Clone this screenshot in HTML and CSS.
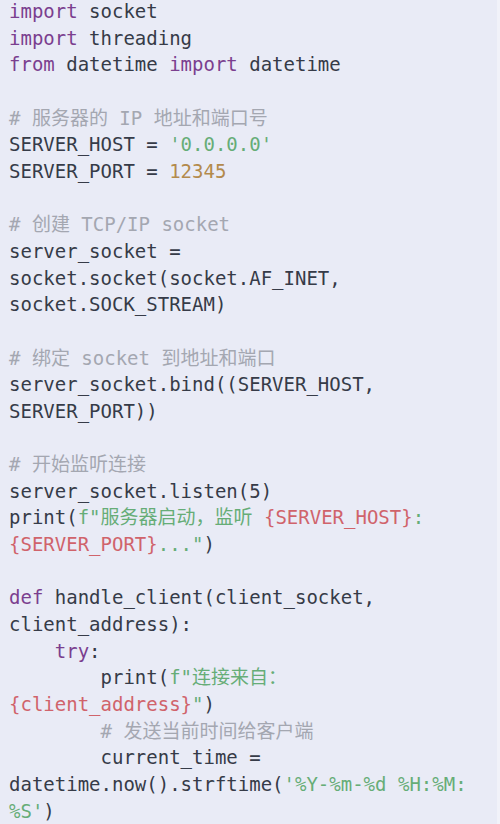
FILE: index.html
```html
<!DOCTYPE html>
<html lang="zh-CN">
<head>
<meta charset="utf-8">
<link rel="stylesheet" href="styles.css">
</head>
<body>
<div class="code"><pre><span class="k">import</span> socket
<span class="k">import</span> threading
<span class="k">from</span> datetime <span class="k">import</span> datetime

<span class="c"># 服务器的 IP 地址和端口号</span>
SERVER_HOST = <span class="s">'0.0.0.0'</span>
SERVER_PORT = <span class="n">12345</span>

<span class="c"># 创建 TCP/IP socket</span>
server_socket =
socket.socket(socket.AF_INET,
socket.SOCK_STREAM)

<span class="c"># 绑定 socket 到地址和端口</span>
server_socket.bind((SERVER_HOST,
SERVER_PORT))

<span class="c"># 开始监听连接</span>
server_socket.listen(5)
print(<span class="s">f"服务器启动，监听 </span><span class="i">{SERVER_HOST}</span><span class="s">:</span>
<span class="i">{SERVER_PORT}</span><span class="s">..."</span>)

<span class="k">def</span> handle_client(client_socket,
client_address):
    <span class="k">try</span>:
        print(<span class="s">f"连接来自：</span>
<span class="i">{client_address}</span><span class="s">"</span>)
        <span class="c"># 发送当前时间给客户端</span>
        current_time =
datetime.now().strftime(<span class="s">'%Y-%m-%d %H:%M:</span>
<span class="s">%S'</span>)
</pre></div>
</body>
</html>
```

FILE: styles.css
```css
html, body {
  margin: 0;
  padding: 0;
  background: #f1f2f9;
  overflow: hidden;
}

.code {
  width: 497px;
  height: 824px;
  background: #e9ebf6;
  overflow: hidden;
}

.code pre {
  margin: -2px 0 0 0;
  padding: 0 0 0 9px;
  font-family: "DejaVu Sans Mono", "Noto Sans CJK SC", monospace;
  font-size: 19px;
  line-height: 26.66px;
  color: #363b48;
  white-space: pre;
}

.k { color: #7b3f8f; }
.c { color: #a4a7b1; }
.s { color: #66ad77; }
.n { color: #b38a4c; }
.i { color: #d0636b; }
```
